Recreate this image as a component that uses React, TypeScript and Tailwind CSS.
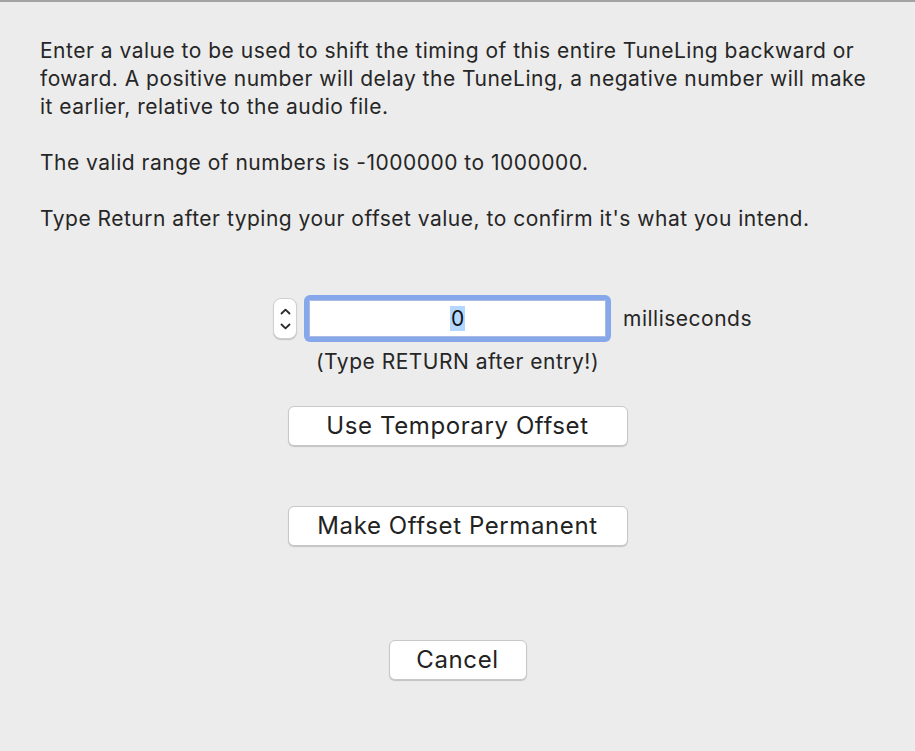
import React from 'react';

const font = { fontFamily: 'Inter, "Noto Sans", "Liberation Sans", sans-serif' };

function MacButton({ label, className = '' }: { label: string; className?: string }) {
  return (
    <button
      className={`h-[40px] rounded-[6px] bg-white border border-[#c8c8c8] shadow-[0_1px_1px_rgba(0,0,0,0.18)] text-[24px] tracking-[0.6px] text-[#222] leading-none ${className}`}
    >
      {label}
    </button>
  );
}

export default function App() {
  return (
    <div className="w-[915px] h-[751px] bg-[#ececec] border-t-2 border-[#a3a3a3] text-[#262626]" style={font}>
      <div className="pl-[40px] pr-[20px] pt-[35px] text-[21px] tracking-[0.5px] leading-[28px] whitespace-nowrap">
        <p>
          Enter a value to be used to shift the timing of this entire TuneLing backward or
          <br />
          foward. A positive number will delay the TuneLing, a negative number will make
          <br />
          it earlier, relative to the audio file.
        </p>
        <p className="mt-[28px]">The valid range of numbers is -1000000 to 1000000.</p>
        <p className="mt-[28px]">Type Return after typing your offset value, to confirm it's what you intend.</p>
      </div>

      <div className="flex flex-col items-center">
        <div className="mt-[62px] w-full grid grid-cols-[1fr_auto_1fr] items-center">
          {/* stepper */}
          <div className="flex justify-end">
            <div className="w-[24px] h-[41px] rounded-[8px] bg-white border border-[#d0d0d0] shadow-[0_1px_1px_rgba(0,0,0,0.18)] flex flex-col items-center justify-center gap-[8px]">
              <svg width="11" height="7" viewBox="0 0 11 7" fill="none" stroke="#2a2a2a" strokeWidth="1.8" strokeLinecap="round" strokeLinejoin="round">
                <polyline points="1.5,5.5 5.5,1.6 9.5,5.5" />
              </svg>
              <svg width="11" height="7" viewBox="0 0 11 7" fill="none" stroke="#2a2a2a" strokeWidth="1.8" strokeLinecap="round" strokeLinejoin="round">
                <polyline points="1.5,1.5 5.5,5.4 9.5,1.5" />
              </svg>
            </div>
          </div>
          {/* text field with focus ring */}
          <div className="mx-[7px] w-[307px] h-[47px] rounded-[6px] bg-[#86a8eb] p-[5px] flex">
            <div className="flex-1 bg-white border border-[#a9bbe0] flex items-center justify-center">
              <span className="bg-[#b3d7ff] text-[21px] leading-[25px] px-[1px] text-[#111]">0</span>
            </div>
          </div>
          <span className="ml-[5px] text-[21px] tracking-[0.5px]">milliseconds</span>
        </div>
        <div className="mt-[6px] text-[21px] tracking-[0.5px] leading-[28px]">(Type RETURN after entry!)</div>

        <MacButton label="Use Temporary Offset" className="mt-[30px] w-[340px]" />
        <MacButton label="Make Offset Permanent" className="mt-[60px] w-[340px]" />
        <MacButton label="Cancel" className="mt-[94px] w-[138px]" />
      </div>
    </div>
  );
}
